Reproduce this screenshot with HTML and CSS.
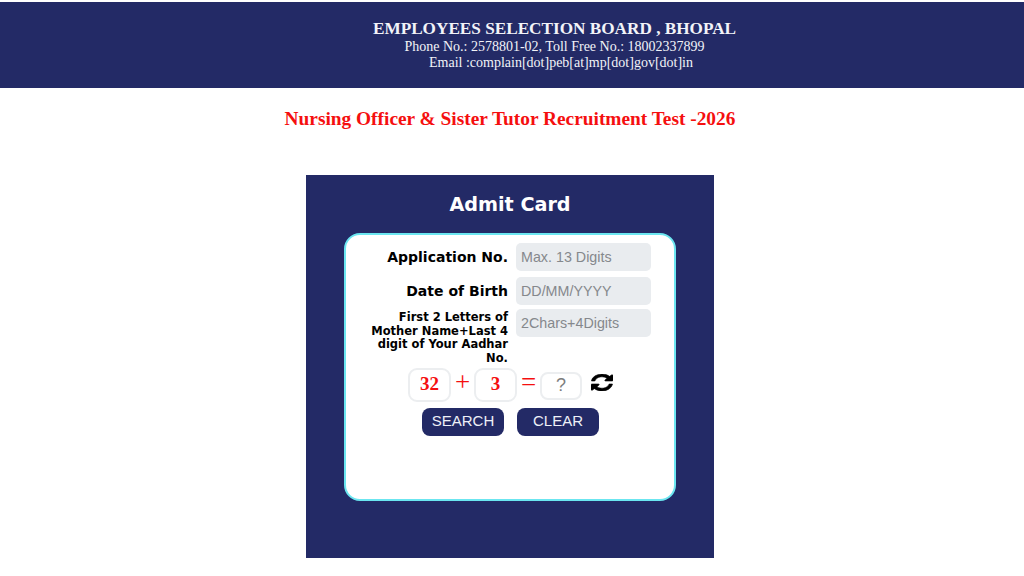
FILE: index.html
```
<!DOCTYPE html>
<html lang="en">
<head>
<meta charset="utf-8">
<title>Admit Card</title>
<link rel="stylesheet" href="styles.css">
</head>
<body>
<header class="banner">
  <div class="banner-title">EMPLOYEES SELECTION BOARD , BHOPAL</div>
  <div class="banner-line">Phone No.: 2578801-02, Toll Free No.: 18002337899</div>
  <div class="banner-line banner-email">Email :complain[dot]peb[at]mp[dot]gov[dot]in</div>
</header>
<h1 class="test-title">Nursing Officer &amp; Sister Tutor Recruitment Test -2026</h1>
<main class="panel">
  <h2 class="panel-title">Admit Card</h2>
  <form class="card">
    <div class="row row-app">
      <label class="label">Application No.</label>
      <input class="field" type="text" placeholder="Max. 13 Digits">
    </div>
    <div class="row row-dob">
      <label class="label">Date of Birth</label>
      <input class="field" type="text" placeholder="DD/MM/YYYY">
    </div>
    <div class="row row-code">
      <label class="label label-small">First 2 Letters of Mother Name+Last 4 digit of Your Aadhar No.</label>
      <input class="field" type="text" placeholder="2Chars+4Digits">
    </div>
    <div class="captcha">
      <span class="cap-box">32</span>
      <span class="cap-op">+</span>
      <span class="cap-box">3</span>
      <span class="cap-op">=</span>
      <input class="cap-answer" type="text" placeholder="?">
      <svg class="refresh" viewBox="0 0 1536 1536" preserveAspectRatio="none" aria-hidden="true"><path d="M1511 928q0 5-1 7-64 268-268 434.5t-478 166.5q-146 0-282.5-55t-243.500-157l-129 129q-19 19-45 19t-45-19-19-45v-448q0-26 19-45t45-19h448q26 0 45 19t19 45-19 45l-137 137q71 66 161 102t187 36q134 0 250-65t186-179q11-17 53-117 8-23 30-23h192q13 0 22.500 9.500t9.500 22.500zm25-800v448q0 26-19 45t-45 19h-448q-26 0-45-19t-19-45 19-45l138-138q-148-137-349-137-134 0-250 65t-186 179q-11 17-53 117-8 23-30 23h-199q-13 0-22.500-9.500t-9.500-22.500v-7q65-268 270-434.500t480-166.500q146 0 284 55.500t245 156.500l130-129q19-19 45-19t45 19 19 45z"/></svg>
    </div>
    <div class="actions">
      <button class="btn" type="button">SEARCH</button>
      <button class="btn" type="button">CLEAR</button>
    </div>
  </form>
</main>
</body>
</html>
```
FILE: styles.css
```
* { box-sizing: border-box; }
html, body { margin: 0; padding: 0; }
body {
  width: 1024px;
  height: 576px;
  overflow: hidden;
  background: #fff;
  padding-top: 2px;
  font-family: "Liberation Serif", serif;
}
.banner {
  height: 86px;
  background: #232a66;
  color: #f2f3f8;
  padding: 17px 0 0 85px;
  text-align: center;
}
.banner-title { font-size: 17.2px; font-weight: bold; line-height: 20px; }
.banner-line { font-size: 14px; line-height: 16px; }
.banner-email { padding-left: 13px; }
.test-title {
  margin: 20px 0 0;
  padding-right: 4px;
  font-size: 19.35px;
  line-height: 22px;
  font-weight: bold;
  color: #f50f0f;
  text-align: center;
}
.panel {
  width: 408px;
  height: 383px;
  margin: 45px 0 0 306px;
  background: #232a66;
  padding-top: 18px;
}
.panel-title {
  margin: 0;
  font-family: "DejaVu Sans", sans-serif;
  font-size: 19.2px;
  line-height: 24px;
  font-weight: bold;
  color: #fff;
  text-align: center;
}
.card {
  width: 332px;
  height: 268px;
  margin: 16px 0 0 38px;
  background: #fff;
  border: 2px solid #6be6f0;
  border-radius: 16px;
  padding-top: 8px;
}
.row { display: flex; align-items: flex-start; }
.row-dob { margin-top: 6px; }
.row-code { margin-top: 4px; }
.label {
  width: 162px;
  height: 28px;
  margin-right: 8px;
  font-family: "DejaVu Sans", sans-serif;
  font-size: 14px;
  font-weight: bold;
  line-height: 28px;
  color: #000;
  text-align: right;
}
.label-small {
  height: auto;
  font-size: 11.5px;
  line-height: 13.7px;
  padding-top: 2px;
  padding-left: 20px;
  width: 162px;
}
.field {
  width: 135px;
  height: 28px;
  border: 0;
  border-radius: 5px;
  background: #e9ecef;
  padding: 0 5px;
  font-family: "Liberation Sans", sans-serif;
  font-size: 14.3px;
}
.field::placeholder { color: #85888c; opacity: 1; }
.captcha {
  display: flex;
  align-items: flex-start;
  margin: 2px 0 0 62px;
}
.cap-box {
  width: 43px;
  height: 34px;
  border: 2px solid #eceef0;
  border-radius: 9px;
  font-size: 19px;
  font-weight: bold;
  line-height: 28px;
  color: #f50f0f;
  text-align: center;
}
.cap-op {
  width: 23px;
  font-size: 27px;
  line-height: 28px;
  color: #f50f0f;
  text-align: center;
}
.cap-answer {
  width: 42px;
  height: 28px;
  margin-top: 4px;
  border: 2px solid #eceef0;
  border-radius: 8px;
  background: #fff;
  padding: 0;
  font-family: "Liberation Sans", sans-serif;
  font-size: 18px;
  text-align: center;
}
.cap-answer::placeholder { color: #7d7d7d; opacity: 1; }
.refresh {
  width: 22px;
  height: 17px;
  margin: 6px 0 0 9px;
  fill: #000;
  stroke: #000;
  stroke-width: 40;
}
.actions {
  display: flex;
  gap: 13px;
  margin: 6px 0 0 76px;
}
.btn {
  width: 82px;
  height: 28px;
  border: 0;
  border-radius: 8px;
  background: #232a66;
  color: #eef0f7;
  padding: 0 0 2px;
  font-family: "Liberation Sans", sans-serif;
  font-size: 15px;
}
```
